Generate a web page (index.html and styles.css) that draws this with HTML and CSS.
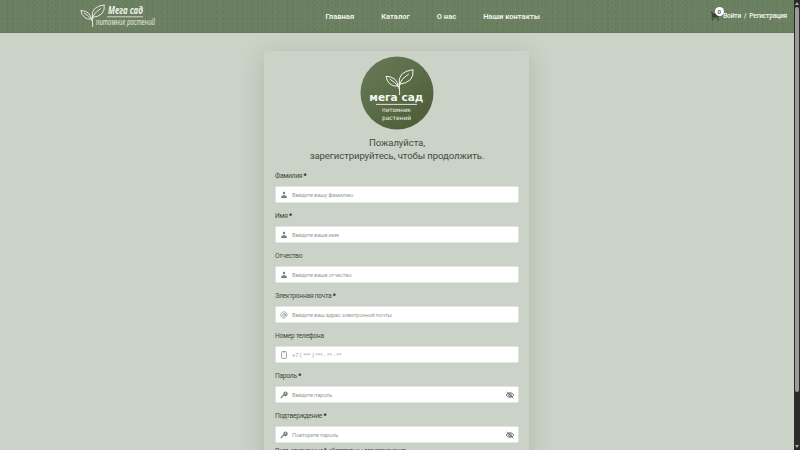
FILE: index.html
```html
<!DOCTYPE html>
<html lang="ru">
<head>
<meta charset="utf-8">
<title>Мега сад — регистрация</title>
<link rel="stylesheet" href="styles.css">
</head>
<body>
<svg class="defs" width="0" height="0">
  <symbol id="user" viewBox="0 0 8 8"><circle cx="4" cy="1.900" r="1.200"/><path d="M1 6.700Q1 5 2.500 4.600L3.300 4.500 3.700 3.600H4.300L4.700 4.500 5.500 4.600Q7 5 7 6.700Q4 7.600 1 6.700Z"/></symbol>
  <symbol id="key" viewBox="0 0 8 8"><path fill-rule="evenodd" d="M4.2.9A2.3 2.3 0 1 1 4.5 4.9L3.8 5H3.2V5.8H2.4V6.6L1.8 7.3H.7V6.1L3.4 3.4A2.4 2.4 0 0 1 4.2.9ZM5.6 1.6A.6.6 0 1 0 5.7 2.8.6.6 0 0 0 5.6 1.6Z"/></symbol>
  <symbol id="eye" viewBox="0 0 10 8"><g fill="none" stroke="currentColor" stroke-width=".8"><path d="M1 4Q5-.7 9 4 5 8.700 1 4Z"/><circle cx="5" cy="4" r="1.400"/><path d="M1.600.9 8.300 7.200"/></g></symbol>
  <symbol id="sprout" viewBox="0 0 30 27"><g fill="none" stroke="#f4f6ef" stroke-linecap="round" stroke-linejoin="round"><path d="M14.600 26Q15 19 13.300 17.500M13.300 17.500Q3 18.500 1 7.500 12 8 13.300 17.500ZM13.300 17.500Q10.500 14 5 10.500M14.300 20Q14 17 15 15.500M14.300 15.500Q12 3 28 1 29.500 14 14.300 15.500ZM14.300 15.500Q17 9 23.500 5.500"/></g></symbol>
</svg>
<div class="screen">
  <div class="page">
    <header class="header">
      <div class="brand">
        <svg width="80" height="30" viewBox="0 0 80 30">
          <use href="#sprout" x="0" y="3" width="26" height="23.400"/>
          <text class="script strong" x="28" y="13" textLength="35" lengthAdjust="spacingAndGlyphs">Мега сад</text>
          <path d="M27 15.800H63" stroke="#e9ede4" stroke-width=".8"/>
          <text class="script" x="16" y="24.300" textLength="59" lengthAdjust="spacingAndGlyphs">питомник растений</text>
        </svg>
      </div>
      <nav class="nav"><a>Главная</a><a>Каталог</a><a>О нас</a><a>Наши контакты</a></nav>
      <div class="account">
        <div class="cart">
          <svg width="10" height="10" viewBox="0 0 10 10"><path d="M.5 1.200H2.200V6.800H8.500M2.200 3H8.600V5.400H2.200" fill="none" stroke="#34432f" stroke-width="1"/><path d="M2.500 3H8.500V5.300H2.500Z" fill="#34432f"/><circle cx="2.500" cy="8.600" r=".9" fill="#34432f"/><circle cx="8" cy="8.600" r=".9" fill="#34432f"/></svg>
          <span class="badge">0</span>
        </div>
        <a>Войти&nbsp; /&nbsp; Регистрация</a>
      </div>
    </header>
    <main class="card">
      <svg class="emblem" width="74" height="74" viewBox="0 0 74 74">
        <defs><linearGradient id="g" x1="0" y1="0" x2=".8" y2="1"><stop offset="0" stop-color="#6a7a59"/><stop offset=".5" stop-color="#5c6d49"/><stop offset="1" stop-color="#4d5b39"/></linearGradient></defs>
        <circle cx="37" cy="37" r="36.500" fill="url(#g)"/>
        <use href="#sprout" x="25" y="12.700" width="30" height="27"/>
        <text class="mark" x="9.300" y="45" textLength="54" lengthAdjust="spacingAndGlyphs">мега сад</text>
        <path d="M16 48.400H57" stroke="#eef1e8" stroke-width=".9"/>
        <text class="mark sub" x="22" y="56.400" textLength="29" lengthAdjust="spacingAndGlyphs">питомник</text>
        <text class="mark sub" x="22" y="63.600" textLength="29" lengthAdjust="spacingAndGlyphs">растений</text>
      </svg>
      <h1 class="title">Пожалуйста,<br>зарегистрируйтесь, чтобы продолжить.</h1>
      <form class="form">
        <label class="field"><span class="label">Фамилия <b>*</b></span><span class="input"><svg class="icon"><use href="#user"/></svg><span>Введите вашу фамилию</span></span></label>
        <label class="field"><span class="label">Имя <b>*</b></span><span class="input"><svg class="icon"><use href="#user"/></svg><span>Введите ваше имя</span></span></label>
        <label class="field"><span class="label">Отчество</span><span class="input"><svg class="icon"><use href="#user"/></svg><span>Введите ваше отчество</span></span></label>
        <label class="field"><span class="label">Электронная почта <b>*</b></span><span class="input"><svg class="icon" viewBox="0 0 8 8"><g fill="none" stroke="currentColor" stroke-width=".7"><circle cx="4" cy="4" r="1.400"/><path d="M5.400 2.600V4.500Q5.600 5.400 6.400 5.200 7.200 4.900 7.200 4A3.200 3.200 0 1 0 5.500 6.800"/></g></svg><span>Введите ваш адрес электронной почты</span></span></label>
        <label class="field"><span class="label">Номер телефона</span><span class="input"><svg class="icon" viewBox="0 0 8 8"><path d="M2.400.6H5.600Q6.400.6 6.400 1.400V6.600Q6.400 7.400 5.600 7.400H2.400Q1.600 7.400 1.600 6.600V1.400Q1.600.6 2.400.6ZM3 .9H5" fill="none" stroke="currentColor" stroke-width=".8"/></svg><span class="phone">+7 ( *** ) *** - ** - **</span></span></label>
        <label class="field"><span class="label">Пароль <b>*</b></span><span class="input"><svg class="icon"><use href="#key"/></svg><span>Введите пароль</span><svg class="eye"><use href="#eye"/></svg></span></label>
        <label class="field"><span class="label">Подтверждение <b>*</b></span><span class="input"><svg class="icon"><use href="#key"/></svg><span>Повторите пароль</span><svg class="eye"><use href="#eye"/></svg></span></label>
        <p class="note">Поля, отмеченные <b>*</b>, обязательны для заполнения</p>
      </form>
    </main>
  </div>
  <div class="scrollbar"><i class="arrow up"></i><i class="thumb"></i><i class="arrow down"></i></div>
</div>
</body>
</html>
```
FILE: styles.css
```css
* { box-sizing: border-box; }
body { margin: 0; font-family: Roboto, "Liberation Sans", sans-serif; color: #454b43; overflow: hidden; }
.defs { display: block; }
.screen { display: flex; width: 800px; height: 450px; overflow: hidden; background: #cbd2c7; }
.page { flex: 1; min-width: 0; }
.header {
  display: grid; grid-template-columns: 325px 1fr auto; align-items: center;
  height: 33px; padding-right: 7px; color: #f4f6f0; border-bottom: 1px solid #66795f;
  background-color: #6c8161;
  background-image: radial-gradient(circle, #657a5b .6px, transparent 1px), radial-gradient(circle, #627759 .5px, transparent 1px);
  background-size: 5px 4px, 7px 6px; background-position: 0 1px, 3px 3px;
}
.brand { padding-left: 79.5px; height: 30px; }
.brand svg { display: block; }
.script { font-family: "Open Sans", sans-serif; font-size: 8.5px; font-style: italic; fill: #eef1e9; }
.script.strong { font-size: 11px; font-weight: 700; }
.nav { display: flex; gap: 27px; padding-left: .5px; font-size: 7.6px; font-weight: 600; white-space: nowrap; }
.account { display: flex; align-items: center; gap: 3px; font-size: 6.6px; font-weight: 500; letter-spacing: -.17px; white-space: nowrap; }
.cart { position: relative; width: 10px; height: 10px; }
.cart svg { display: block; }
.badge {
  position: absolute; left: 4.5px; top: -4px; width: 9px; height: 9px; border-radius: 50%;
  background: #fff; color: #444; font-size: 6px; font-weight: 500; line-height: 9px; text-align: center;
}
.card {
  width: 265px; height: 440px; margin: 18px 0 0 264px; padding: 5px 10px 0 11px;
  background: #cbd2c7; border-radius: 3px; box-shadow: 0 4px 24px rgba(70, 80, 70, .2);
}
.emblem { display: block; margin: 0 auto; }
.mark { font-family: "DejaVu Sans", sans-serif; font-size: 11px; font-weight: 700; fill: #f5f7f0; }
.mark.sub { font-size: 6px; font-weight: 400; }
.title { margin: 5.5px 0 0; font-size: 9.6px; font-weight: 400; line-height: 13.5px; text-align: center; letter-spacing: -.1px; white-space: nowrap; }
.form { margin-top: 8.5px; }
.field { display: block; height: 40px; }
.label { display: block; height: 15px; font-size: 6.7px; line-height: 10px; letter-spacing: -.27px; white-space: nowrap; }
.label b, .note b { color: #181b18; }
.input {
  display: flex; align-items: center; height: 17px; padding: 0 4px 0 4px;
  background: #fff; border: 1px solid #e2e6df; border-radius: 2px;
  color: #9b9f9b; font-size: 5.8px; letter-spacing: -.23px; white-space: nowrap;
}
.icon { width: 8px; height: 8px; margin-right: 4px; fill: #7d817d; color: #858985; }
.eye { width: 10px; height: 8px; margin-left: auto; margin-right: -1px; color: #5b605c; }
.phone { letter-spacing: -.04px; }
.note { margin: -5px 0 0; font-size: 6px; line-height: 8px; letter-spacing: -.27px; white-space: nowrap; }
.scrollbar { display: flex; flex-direction: column; align-items: center; width: 6px; padding: 2px 0; background: #2b2b2b; }
.thumb { width: 4px; height: 385px; margin-top: 2px; background: #9b9b9b; border-radius: 2px; }
.arrow { border: 2px solid transparent; }
.up { border-top: 0; border-bottom: 3px solid #aaa; }
.down { margin-top: auto; border-bottom: 0; border-top: 3px solid #aaa; }
```
